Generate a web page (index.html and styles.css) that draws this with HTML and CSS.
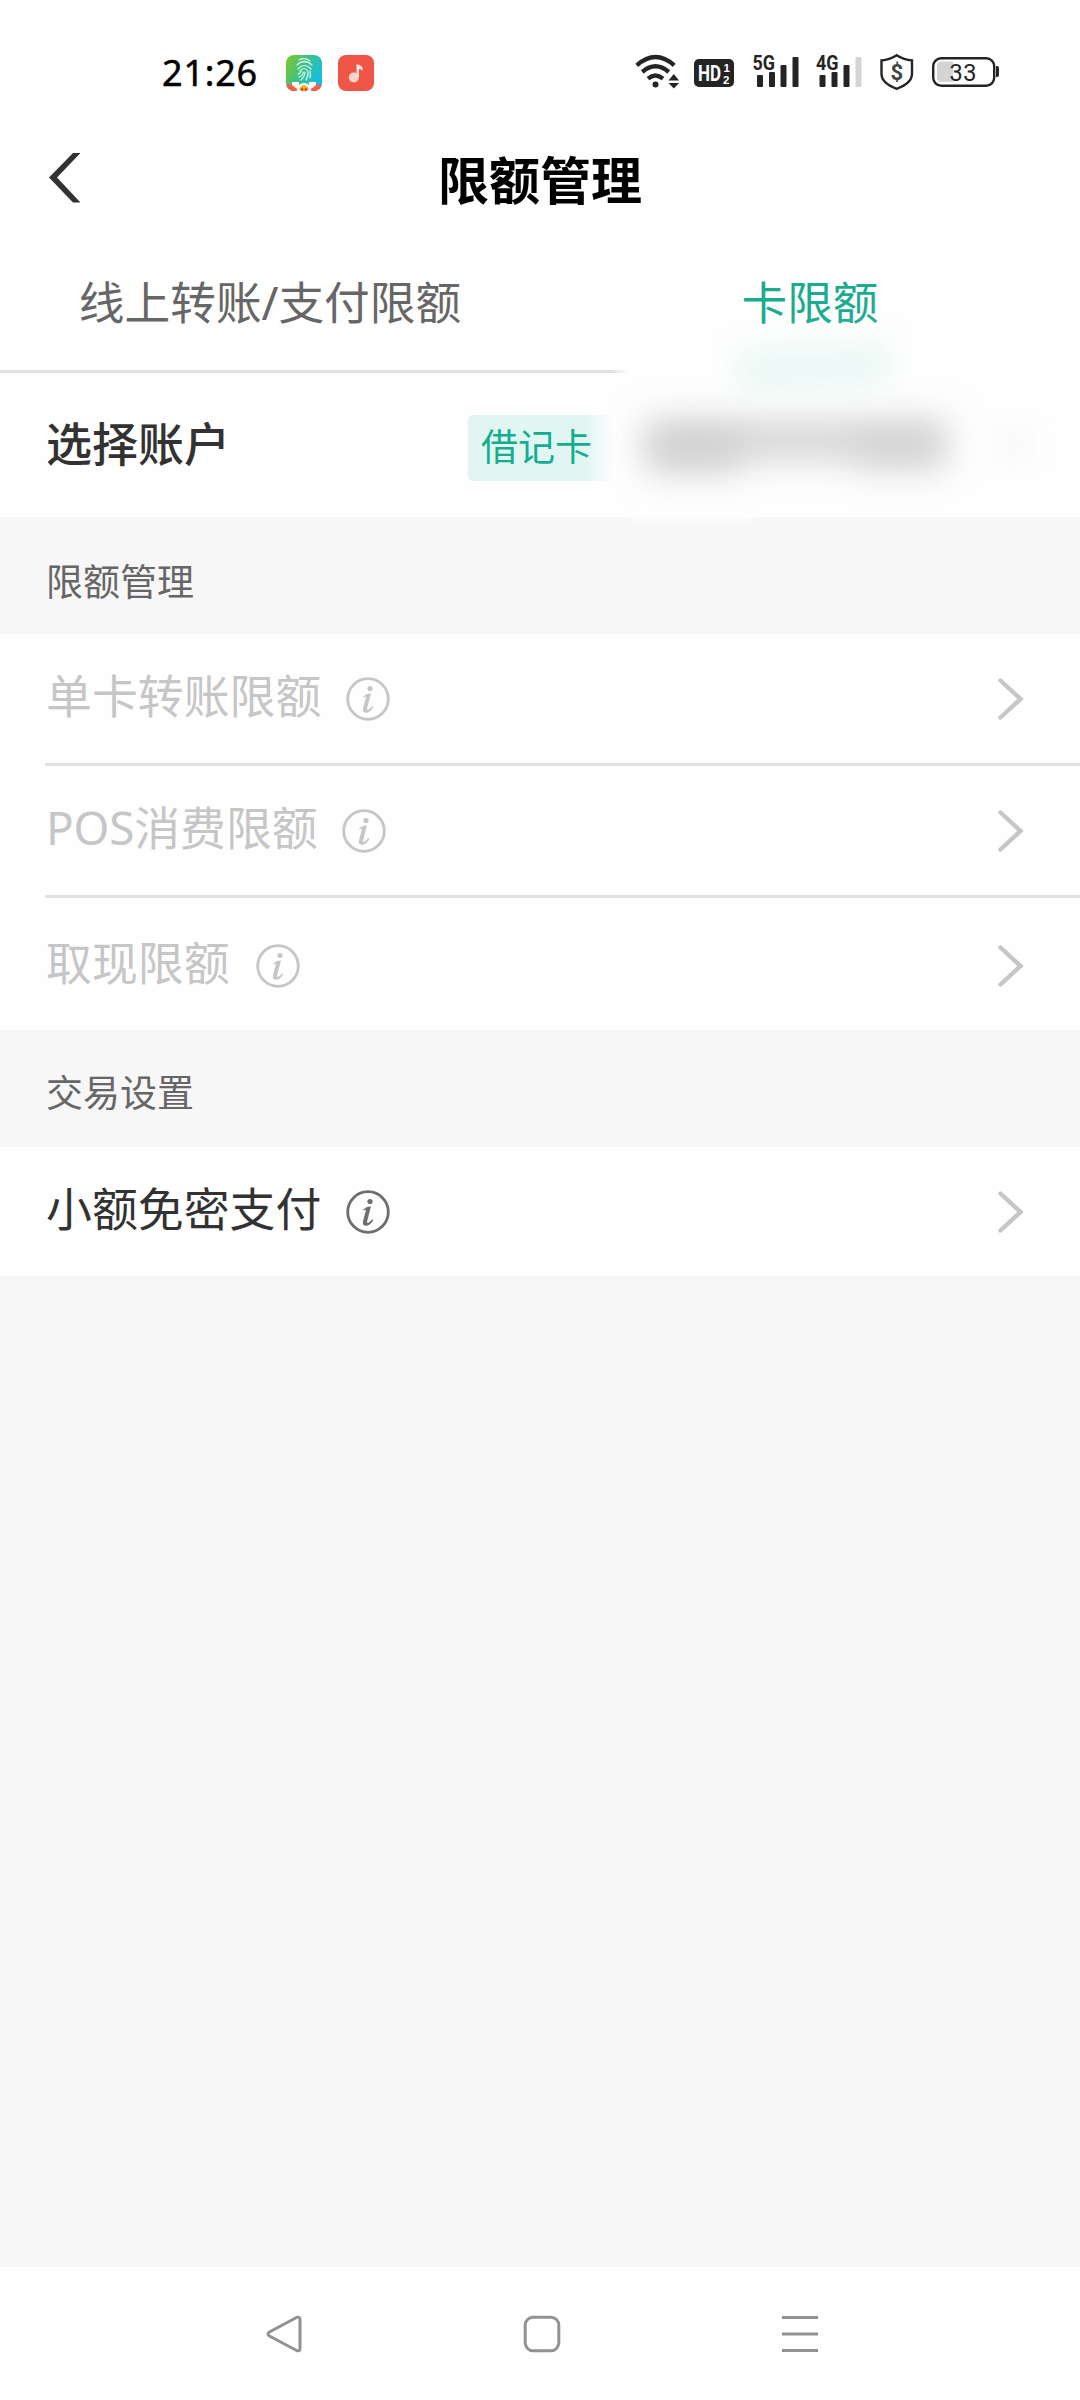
FILE: index.html
```html
<!DOCTYPE html>
<html lang="zh-CN">
<head>
<meta charset="utf-8">
<title>限额管理</title>
<link rel="stylesheet" href="styles.css">
</head>
<body>
<div class="screen">
  <div class="status">
    <span class="time">21:26</span>
    <svg class="app app-finger" width="36" height="36" viewBox="0 0 36 36">
      <defs>
        <linearGradient id="fg" x1="0" y1="0.1" x2="1" y2="0.6"><stop offset="0" stop-color="#7cc82a"/><stop offset="0.5" stop-color="#3cc08c"/><stop offset="1" stop-color="#14bdea"/></linearGradient>
        <clipPath id="fc"><rect width="36" height="36" rx="8"/></clipPath>
      </defs>
      <g clip-path="url(#fc)">
        <rect width="36" height="36" fill="url(#fg)"/>
        <g fill="none" stroke="#d9fbe6" stroke-width="1.2" stroke-linecap="round">
          <path d="M13 5q5-3 11 1M11 10q7-7 15 0M12 14q6-7 13 0M14 16q4-5 8 0v5M12 19q2 0 3-3M17 17q1 3-4 5M19 17q0 4-4 8M22 19q-1 4-2 6M24 16q1 4 0 7"/>
        </g>
        <path d="M0 30L6 29l6 3 2 4H0zM36 30l-6-1-6 3-2 4h14z" fill="#f0614c"/>
        <path d="M6 27h7v4l-2 3-5-4zM23 27h7v3l-5 4-2-3z" fill="#fff"/>
        <circle cx="18" cy="35" r="7" fill="#fff"/>
        <path d="M13 34l2-3 3-1 3 1 2 3-3 2h-4z" fill="#f9b21d"/>
        <circle cx="16" cy="34.500" r="1.500" fill="#e8452d"/><circle cx="20" cy="34.500" r="1.500" fill="#e8452d"/>
      </g>
    </svg>
    <svg class="app app-music" width="36" height="36" viewBox="0 0 36 36">
      <rect width="36" height="36" rx="8" fill="#ef5648"/>
      <circle cx="15.800" cy="22.500" r="5" fill="#fbd3cd"/>
      <path d="M18.500 22V9.200q3.500 0 6 3.200v3q-2-1.400-3.600-1.400v8z" fill="#fde6e2"/>
    </svg>
    <svg class="signals" width="370" height="46" viewBox="630 48 370 46" fill="#242424">
      <g fill="none" stroke="#242424" stroke-width="4.300">
        <path d="M636.800 65.300q18.700-16.500 37.400 0"/>
        <path d="M642.300 72q13.200-11.400 26.400 0"/>
        <path d="M648 78.600q7.500-6.200 15 0"/>
      </g>
      <circle cx="655.500" cy="84.500" r="3"/>
      <path d="M668.500 80.500l5.300-6.500 5.300 6.500zM668.500 83l5.300 5.500 5.300-5.500z"/>
      <rect x="694" y="59" width="40" height="28" rx="5"/>
      <text class="hd" x="698" y="81" textLength="23" lengthAdjust="spacingAndGlyphs">HD</text>
      <text class="hd-num" x="723.500" y="72">1</text>
      <text class="hd-num" x="723" y="84">2</text>
      <text class="net" x="752.500" y="69.500" textLength="22.500" lengthAdjust="spacingAndGlyphs">5G</text>
      <g><rect x="757" y="75" width="6" height="12" rx="1"/><rect x="769" y="72" width="6" height="15" rx="1"/><rect x="780.500" y="65" width="6" height="22" rx="1"/><rect x="792.500" y="57" width="6" height="30" rx="1"/></g>
      <text class="net" x="816" y="69.500" textLength="22.500" lengthAdjust="spacingAndGlyphs">4G</text>
      <g><rect x="819.500" y="75" width="6" height="12" rx="1"/><rect x="831.500" y="72" width="6" height="15" rx="1"/><rect x="843.500" y="65" width="6" height="22" rx="1"/><rect x="855.500" y="57" width="6" height="30" rx="1" fill="#d4d4d4"/></g>
      <path d="M896.700 55.300Q904 60 912 60.500V74q0 9-15.300 14.800Q881.500 83 881.500 74V60.500Q889.500 60 896.700 55.300z" fill="none" stroke="#242424" stroke-width="2.400"/>
      <text class="dollar" x="896.700" y="79.500" text-anchor="middle">$</text>
      <rect x="933.200" y="58.200" width="61" height="27.600" rx="8" fill="none" stroke="#242424" stroke-width="2.400"/>
      <path d="M941 61.500h12v20.500h-12q-4-.5-4-4.500v-11.500q0-4 4-4.500z" fill="#d4d4d4"/>
      <path d="M996 66h1q2 0 2 2v7q0 2-2 2h-1z"/>
      <text class="battery" x="949.500" y="81" textLength="27" lengthAdjust="spacing">33</text>
    </svg>
  </div>

  <header class="header">
    <svg class="back" width="31" height="50" viewBox="0 0 31 50"><path d="M24 0h7.500L8 24.500 31.500 49.500H24L0 24.500z" fill="#323232"/></svg>
    <h1 class="title">限额管理</h1>
  </header>

  <nav class="tabs">
    <div class="tab">线上转账<span class="latin">/</span>支付限额</div>
    <div class="tab tab-active">卡限额</div>
    <div class="tab-glow"></div>
  </nav>

  <section class="account">
    <span class="account-label">选择账户</span>
    <span class="tag">借记卡</span>
    <span class="mask mask-text"></span>
    <span class="mask mask-left"></span>
    <span class="mask mask-right"></span>
    <span class="mask mask-arrow"></span>
    <span class="mask mask-edge"></span>
  </section>

  <h2 class="group">限额管理</h2>
  <ul class="list">
    <li class="row row-off">
      <span class="name">单卡转账限额</span>
      <svg class="info" width="44" height="44" viewBox="0 0 44 44"><use href="#info"/></svg>
      <svg class="chevron" width="26" height="42" viewBox="0 0 26 42"><use href="#chev"/></svg>
    </li>
    <li class="row row-off">
      <span class="name"><span class="latin">POS</span>消费限额</span>
      <svg class="info" width="44" height="44" viewBox="0 0 44 44"><use href="#info"/></svg>
      <svg class="chevron" width="26" height="42" viewBox="0 0 26 42"><use href="#chev"/></svg>
    </li>
    <li class="row row-off row-last">
      <span class="name">取现限额</span>
      <svg class="info" width="44" height="44" viewBox="0 0 44 44"><use href="#info"/></svg>
      <svg class="chevron" width="26" height="42" viewBox="0 0 26 42"><use href="#chev"/></svg>
    </li>
  </ul>

  <h2 class="group group-second">交易设置</h2>
  <ul class="list">
    <li class="row row-single">
      <span class="name">小额免密支付</span>
      <svg class="info" width="44" height="44" viewBox="0 0 44 44"><use href="#info"/></svg>
      <svg class="chevron" width="26" height="42" viewBox="0 0 26 42"><use href="#chev"/></svg>
    </li>
  </ul>

  <footer class="navbar">
    <svg width="36" height="38" viewBox="0 0 36 38"><path d="M31 2.300L3 17.300q-2 1.700 0 3.400L31 35.700q3 .8 3-2.200V4.500q0-3-3-2.200z"/></svg>
    <svg width="38" height="38" viewBox="0 0 38 38"><rect x="2.200" y="2.200" width="33.600" height="33.600" rx="8"/></svg>
    <svg width="36" height="38" viewBox="0 0 36 38"><path d="M0 2.500h36M0 19h36M0 35.500h36"/></svg>
  </footer>
</div>
<svg class="defs" width="0" height="0">
  <symbol id="info" viewBox="0 0 44 44">
    <circle cx="22" cy="22" r="20.300" fill="none" stroke="currentColor" stroke-width="2.800"/>
    <circle cx="24" cy="11.500" r="2.600" fill="currentColor"/>
    <path d="M17 19.700q3-3 8-3.400L21.200 31q-.6 2.600 1.200 1.800t3.800-3.500l1.200.6q-2.700 5.200-7 5.800-4.700.2-3.200-5.200l2.600-9.800q.6-1.700-2.400-.1z" fill="currentColor"/>
  </symbol>
  <symbol id="chev" viewBox="0 0 26 42">
    <path d="M2.500 2.500L22.500 21 2.500 39.500" fill="none" stroke="#c6c6c6" stroke-width="4.400" stroke-linecap="round"/>
  </symbol>
</svg>
</body>
</html>
```
FILE: styles.css
```css
* { box-sizing: border-box; margin: 0; padding: 0; }
body {
  width: 1080px;
  background: #f7f7f7;
  font-family: "Noto Sans CJK SC", sans-serif;
  color: #323232;
}
.screen { display: flex; flex-direction: column; height: 2400px; overflow: hidden; }
.defs { position: absolute; }
.latin { font-family: "Noto Sans", sans-serif; line-height: 1; letter-spacing: -0.2px; }

.status { display: flex; align-items: flex-start; height: 120px; padding: 49px 0 0 162px; background: #fefefe; }
.time { width: 124px; font: 400 36px/48px "Noto Sans", sans-serif; letter-spacing: 0.8px; -webkit-text-stroke: 0.5px #000; color: #000; white-space: nowrap; }
.app { margin-top: 6px; }
.app-music { margin-left: 16px; }
.signals { margin: -1px 0 0 256px; }
.hd { font: 700 22px Roboto, sans-serif; fill: #fff; }
.hd-num { font: 700 11.5px "Liberation Sans", sans-serif; fill: #fff; }
.net { font: 700 20px Roboto, sans-serif; }
.dollar { font: 700 22px Roboto, sans-serif; fill: #444; }
.battery { font: 400 23.5px Roboto, sans-serif; }

.header { display: grid; grid-template-columns: 1fr auto 1fr; align-items: center; height: 118px; padding: 0 49px 2px; background: #fefefe; }
.title { font-size: 51px; font-weight: 700; line-height: 70px; color: #000; }

.tabs { position: relative; z-index: 1; display: grid; grid-template-columns: 540px 540px; height: 135px; background: linear-gradient(90deg, #e2e2e2 612px, #fefefe 628px) bottom / 100% 3px no-repeat, #fefefe; }
.tab { padding-top: 29px; text-align: center; font-size: 45.7px; line-height: 66px; color: #666; }
.tab-active { color: #1aac8e; }
.tab-glow { position: absolute; left: 738px; top: 108px; width: 150px; height: 44px; background: #eaf8f5; filter: blur(14px); transform: rotate(-3deg); }

.account { position: relative; display: flex; align-items: flex-start; height: 144px; padding: 35px 46px 0; background: #fefefe; }
.account-label { width: 422px; font-size: 46px; font-weight: 500; line-height: 66px; }
.tag { width: 150px; height: 66px; margin-top: 7px; padding-left: 13px; border-radius: 5px; background: linear-gradient(90deg, #e1f6f3 118px, #fefefe 145px); font-size: 37px; line-height: 60px; color: #14ae8e; }
.mask { position: absolute; filter: blur(18px); }
.mask-text { left: 647px; top: 49px; width: 298px; height: 36px; background: #d0d0d0; }
.mask-left { left: 648px; top: 62px; width: 92px; height: 38px; background: #c4c4c4; opacity: 0.6; }
.mask-right { left: 855px; top: 62px; width: 88px; height: 36px; background: #c4c4c4; opacity: 0.45; }
.mask-arrow { left: 995px; top: 52px; width: 36px; height: 40px; background: #fafafa; filter: blur(8px); }
.mask-edge { left: 630px; top: 136px; width: 120px; height: 12px; background: #fefefe; filter: blur(4px); }

.group { height: 117px; padding: 36px 46px 0; font-size: 37px; font-weight: 400; line-height: 54px; color: #666; }
.group-second { padding-top: 34px; }
.list { list-style: none; background: #fefefe; }
.row { display: flex; align-items: flex-start; height: 132px; padding: 26px 56px 0 46px; }
.row:not(:last-child) { background: linear-gradient(#e2e2e2, #e2e2e2) 45px 129px / 1035px 3px no-repeat; }
.row-last { padding-top: 29px; }
.list .row-single { height: 129px; padding-top: 26px; }
.row-off { color: #c6c6c6; }
.name { font-size: 45.9px; line-height: 66px; white-space: nowrap; }
.info { margin: 16.5px 0 0 24.5px; color: #c6c6c6; }
.row-last .info { margin-left: 26.5px; }
.row-single .info { margin-left: 24.5px; color: #6e6e6e; }
.chevron { margin: 17.5px 0 0 auto; }

.navbar { display: flex; justify-content: space-between; height: 133px; margin-top: auto; padding: 48px 262px 0 266px; background: #fefefe; }
.navbar svg { fill: none; stroke: #929292; stroke-width: 3; }
```
